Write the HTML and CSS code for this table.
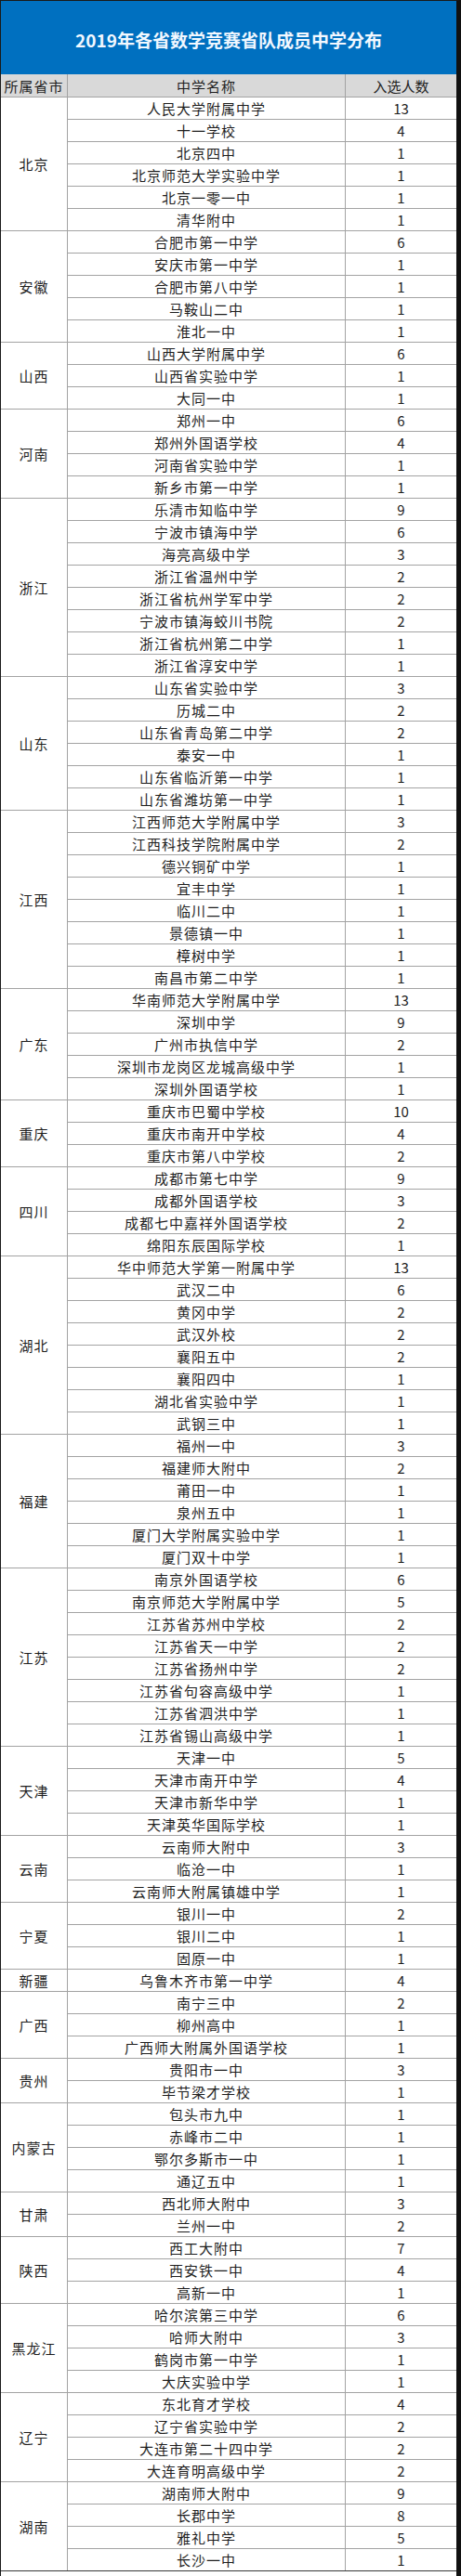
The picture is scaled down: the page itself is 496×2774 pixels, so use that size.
FILE: index.html
```html
<!DOCTYPE html>
<html lang="zh-CN">
<head>
<meta charset="utf-8">
<title>2019年各省数学竞赛省队成员中学分布</title>
<link rel="stylesheet" href="styles.css">
</head>
<body>
<div class="page">
  <div class="banner"><h1>2019年各省数学竞赛省队成员中学分布</h1></div>
  <div class="grid">
    <div class="cell head">所属省市</div><div class="cell head name">中学名称</div><div class="cell head num">入选人数</div>

    <div class="cell prov span-6">北京</div>
    <div class="cell name">人民大学附属中学</div><div class="cell num">13</div>
    <div class="cell name">十一学校</div><div class="cell num">4</div>
    <div class="cell name">北京四中</div><div class="cell num">1</div>
    <div class="cell name">北京师范大学实验中学</div><div class="cell num">1</div>
    <div class="cell name">北京一零一中</div><div class="cell num">1</div>
    <div class="cell name">清华附中</div><div class="cell num">1</div>

    <div class="cell prov span-5">安徽</div>
    <div class="cell name">合肥市第一中学</div><div class="cell num">6</div>
    <div class="cell name">安庆市第一中学</div><div class="cell num">1</div>
    <div class="cell name">合肥市第八中学</div><div class="cell num">1</div>
    <div class="cell name">马鞍山二中</div><div class="cell num">1</div>
    <div class="cell name">淮北一中</div><div class="cell num">1</div>

    <div class="cell prov span-3">山西</div>
    <div class="cell name">山西大学附属中学</div><div class="cell num">6</div>
    <div class="cell name">山西省实验中学</div><div class="cell num">1</div>
    <div class="cell name">大同一中</div><div class="cell num">1</div>

    <div class="cell prov span-4">河南</div>
    <div class="cell name">郑州一中</div><div class="cell num">6</div>
    <div class="cell name">郑州外国语学校</div><div class="cell num">4</div>
    <div class="cell name">河南省实验中学</div><div class="cell num">1</div>
    <div class="cell name">新乡市第一中学</div><div class="cell num">1</div>

    <div class="cell prov span-8">浙江</div>
    <div class="cell name">乐清市知临中学</div><div class="cell num">9</div>
    <div class="cell name">宁波市镇海中学</div><div class="cell num">6</div>
    <div class="cell name">海亮高级中学</div><div class="cell num">3</div>
    <div class="cell name">浙江省温州中学</div><div class="cell num">2</div>
    <div class="cell name">浙江省杭州学军中学</div><div class="cell num">2</div>
    <div class="cell name">宁波市镇海蛟川书院</div><div class="cell num">2</div>
    <div class="cell name">浙江省杭州第二中学</div><div class="cell num">1</div>
    <div class="cell name">浙江省淳安中学</div><div class="cell num">1</div>

    <div class="cell prov span-6">山东</div>
    <div class="cell name">山东省实验中学</div><div class="cell num">3</div>
    <div class="cell name">历城二中</div><div class="cell num">2</div>
    <div class="cell name">山东省青岛第二中学</div><div class="cell num">2</div>
    <div class="cell name">泰安一中</div><div class="cell num">1</div>
    <div class="cell name">山东省临沂第一中学</div><div class="cell num">1</div>
    <div class="cell name">山东省潍坊第一中学</div><div class="cell num">1</div>

    <div class="cell prov span-8">江西</div>
    <div class="cell name">江西师范大学附属中学</div><div class="cell num">3</div>
    <div class="cell name">江西科技学院附属中学</div><div class="cell num">2</div>
    <div class="cell name">德兴铜矿中学</div><div class="cell num">1</div>
    <div class="cell name">宜丰中学</div><div class="cell num">1</div>
    <div class="cell name">临川二中</div><div class="cell num">1</div>
    <div class="cell name">景德镇一中</div><div class="cell num">1</div>
    <div class="cell name">樟树中学</div><div class="cell num">1</div>
    <div class="cell name">南昌市第二中学</div><div class="cell num">1</div>

    <div class="cell prov span-5">广东</div>
    <div class="cell name">华南师范大学附属中学</div><div class="cell num">13</div>
    <div class="cell name">深圳中学</div><div class="cell num">9</div>
    <div class="cell name">广州市执信中学</div><div class="cell num">2</div>
    <div class="cell name">深圳市龙岗区龙城高级中学</div><div class="cell num">1</div>
    <div class="cell name">深圳外国语学校</div><div class="cell num">1</div>

    <div class="cell prov span-3">重庆</div>
    <div class="cell name">重庆市巴蜀中学校</div><div class="cell num">10</div>
    <div class="cell name">重庆市南开中学校</div><div class="cell num">4</div>
    <div class="cell name">重庆市第八中学校</div><div class="cell num">2</div>

    <div class="cell prov span-4">四川</div>
    <div class="cell name">成都市第七中学</div><div class="cell num">9</div>
    <div class="cell name">成都外国语学校</div><div class="cell num">3</div>
    <div class="cell name">成都七中嘉祥外国语学校</div><div class="cell num">2</div>
    <div class="cell name">绵阳东辰国际学校</div><div class="cell num">1</div>

    <div class="cell prov span-8">湖北</div>
    <div class="cell name">华中师范大学第一附属中学</div><div class="cell num">13</div>
    <div class="cell name">武汉二中</div><div class="cell num">6</div>
    <div class="cell name">黄冈中学</div><div class="cell num">2</div>
    <div class="cell name">武汉外校</div><div class="cell num">2</div>
    <div class="cell name">襄阳五中</div><div class="cell num">2</div>
    <div class="cell name">襄阳四中</div><div class="cell num">1</div>
    <div class="cell name">湖北省实验中学</div><div class="cell num">1</div>
    <div class="cell name">武钢三中</div><div class="cell num">1</div>

    <div class="cell prov span-6">福建</div>
    <div class="cell name">福州一中</div><div class="cell num">3</div>
    <div class="cell name">福建师大附中</div><div class="cell num">2</div>
    <div class="cell name">莆田一中</div><div class="cell num">1</div>
    <div class="cell name">泉州五中</div><div class="cell num">1</div>
    <div class="cell name">厦门大学附属实验中学</div><div class="cell num">1</div>
    <div class="cell name">厦门双十中学</div><div class="cell num">1</div>

    <div class="cell prov span-8">江苏</div>
    <div class="cell name">南京外国语学校</div><div class="cell num">6</div>
    <div class="cell name">南京师范大学附属中学</div><div class="cell num">5</div>
    <div class="cell name">江苏省苏州中学校</div><div class="cell num">2</div>
    <div class="cell name">江苏省天一中学</div><div class="cell num">2</div>
    <div class="cell name">江苏省扬州中学</div><div class="cell num">2</div>
    <div class="cell name">江苏省句容高级中学</div><div class="cell num">1</div>
    <div class="cell name">江苏省泗洪中学</div><div class="cell num">1</div>
    <div class="cell name">江苏省锡山高级中学</div><div class="cell num">1</div>

    <div class="cell prov span-4">天津</div>
    <div class="cell name">天津一中</div><div class="cell num">5</div>
    <div class="cell name">天津市南开中学</div><div class="cell num">4</div>
    <div class="cell name">天津市新华中学</div><div class="cell num">1</div>
    <div class="cell name">天津英华国际学校</div><div class="cell num">1</div>

    <div class="cell prov span-3">云南</div>
    <div class="cell name">云南师大附中</div><div class="cell num">3</div>
    <div class="cell name">临沧一中</div><div class="cell num">1</div>
    <div class="cell name">云南师大附属镇雄中学</div><div class="cell num">1</div>

    <div class="cell prov span-3">宁夏</div>
    <div class="cell name">银川一中</div><div class="cell num">2</div>
    <div class="cell name">银川二中</div><div class="cell num">1</div>
    <div class="cell name">固原一中</div><div class="cell num">1</div>

    <div class="cell prov">新疆</div>
    <div class="cell name">乌鲁木齐市第一中学</div><div class="cell num">4</div>

    <div class="cell prov span-3">广西</div>
    <div class="cell name">南宁三中</div><div class="cell num">2</div>
    <div class="cell name">柳州高中</div><div class="cell num">1</div>
    <div class="cell name">广西师大附属外国语学校</div><div class="cell num">1</div>

    <div class="cell prov span-2">贵州</div>
    <div class="cell name">贵阳市一中</div><div class="cell num">3</div>
    <div class="cell name">毕节梁才学校</div><div class="cell num">1</div>

    <div class="cell prov span-4">内蒙古</div>
    <div class="cell name">包头市九中</div><div class="cell num">1</div>
    <div class="cell name">赤峰市二中</div><div class="cell num">1</div>
    <div class="cell name">鄂尔多斯市一中</div><div class="cell num">1</div>
    <div class="cell name">通辽五中</div><div class="cell num">1</div>

    <div class="cell prov span-2">甘肃</div>
    <div class="cell name">西北师大附中</div><div class="cell num">3</div>
    <div class="cell name">兰州一中</div><div class="cell num">2</div>

    <div class="cell prov span-3">陕西</div>
    <div class="cell name">西工大附中</div><div class="cell num">7</div>
    <div class="cell name">西安铁一中</div><div class="cell num">4</div>
    <div class="cell name">高新一中</div><div class="cell num">1</div>

    <div class="cell prov span-4">黑龙江</div>
    <div class="cell name">哈尔滨第三中学</div><div class="cell num">6</div>
    <div class="cell name">哈师大附中</div><div class="cell num">3</div>
    <div class="cell name">鹤岗市第一中学</div><div class="cell num">1</div>
    <div class="cell name">大庆实验中学</div><div class="cell num">1</div>

    <div class="cell prov span-4">辽宁</div>
    <div class="cell name">东北育才学校</div><div class="cell num">4</div>
    <div class="cell name">辽宁省实验中学</div><div class="cell num">2</div>
    <div class="cell name">大连市第二十四中学</div><div class="cell num">2</div>
    <div class="cell name">大连育明高级中学</div><div class="cell num">2</div>

    <div class="cell prov span-4">湖南</div>
    <div class="cell name">湖南师大附中</div><div class="cell num">9</div>
    <div class="cell name">长郡中学</div><div class="cell num">8</div>
    <div class="cell name">雅礼中学</div><div class="cell num">5</div>
    <div class="cell name">长沙一中</div><div class="cell num">1</div>
  </div>
</div>
</body>
</html>
```
FILE: styles.css
```css
* { box-sizing: border-box; }
html, body { margin: 0; padding: 0; background: #ffffff; }
body {
  font-family: "Noto Sans CJK SC", "Noto Sans", sans-serif;
  color: #1e1e1e;
}
.page {
  width: 496px;
  height: 2774px;
  border-top: 1px solid #1a1a1a;
  border-left: 1px solid #1a1a1a;
  border-right: 5px solid #111111;
  background: #ffffff;
}
.banner {
  height: 79px;
  background: #0070c0;
  display: flex;
  align-items: center;
  justify-content: center;
  padding-top: 3px;
}
.banner h1 {
  margin: 0;
  font-size: 19px;
  font-weight: 700;
  color: #f2f8ff;
  letter-spacing: 0;
}
.grid {
  display: grid;
  grid-template-columns: 71px 298px 119px;
  grid-template-rows: 24px;
  grid-auto-rows: 23px;
  gap: 1px;
  background: #a3a3a3;
  border-bottom: 1px solid #3a3a3a;
  width: 490px;
}
.cell {
  background: #ffffff;
  display: flex;
  align-items: center;
  justify-content: center;
  font-size: 15px;
  line-height: 1;
  letter-spacing: 1px;
  white-space: nowrap;
}
.head { background: #d9d9d9; }
.prov { grid-column: 1; }
.name { grid-column: 2; }
.num { grid-column: 3; letter-spacing: 0; font-size: 15px; }
.span-2 { grid-row: span 2; }
.span-3 { grid-row: span 3; }
.span-4 { grid-row: span 4; }
.span-5 { grid-row: span 5; }
.span-6 { grid-row: span 6; }
.span-8 { grid-row: span 8; }
```
